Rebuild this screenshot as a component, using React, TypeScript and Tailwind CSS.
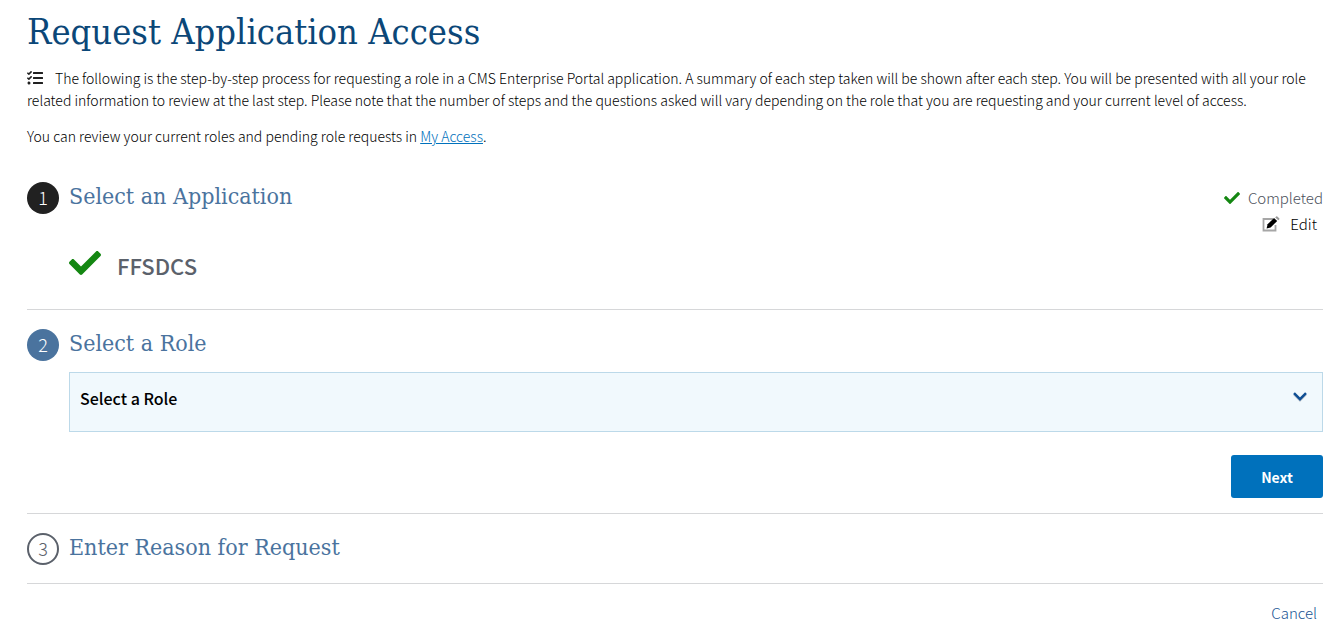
import { useState } from 'react';
import type { ReactNode } from 'react';
import { FaCheck, FaTasks } from 'react-icons/fa';

type StepState = 'done' | 'current' | 'pending';

const badgeStyles: Record<StepState, string> = {
  done: 'bg-[#212121] text-white',
  current: 'bg-[#4a739e] text-white',
  pending: 'border-2 border-[#5b616b] text-[#5b616b]',
};

function EditIcon() {
  return (
    <svg viewBox="0 0 18 16" className="w-[18px] h-4" aria-hidden="true">
      <path d="M11 3H1.5v11.5h12V9" fill="none" stroke="#a6a6a6" strokeWidth="1.8" />
      <path d="M4.6 12.4l1-4.1 6.4-6.3 3.2 3-6.6 6.4z" fill="#000" />
      <path d="M13.2 1.4l.9-.9q.6-.5 1.2 0l1.9 1.7q.6.6 0 1.2l-.9.9z" fill="#999" />
    </svg>
  );
}

function StepHeading({ num, title, state }: { num: number; title: string; state: StepState }) {
  return (
    <div className="flex items-start gap-2.5">
      <span className={`mt-0.5 flex w-8 h-8 shrink-0 items-center justify-center rounded-full pb-0.5 text-lg font-light leading-7 ${badgeStyles[state]}`}>
        {num}
      </span>
      <h2 className="font-['DejaVu_Serif_Condensed','DejaVu_Serif',serif] text-[23px] leading-8 text-[#4a739e]">{title}</h2>
    </div>
  );
}

function Step({ children }: { children: ReactNode }) {
  return <section className="border-b border-[#d6d7d9]">{children}</section>;
}

export default function App() {
  const [role, setRole] = useState('');

  return (
    <main className="pl-[27px] pr-[19px] pt-2 font-['Noto_Sans_CJK_SC',sans-serif] text-[#212121]">
      <h1 className="font-['DejaVu_Serif_Condensed','DejaVu_Serif',serif] text-4xl leading-12 text-[#0b4778]">
        Request Application Access
      </h1>

      <p className="mt-3 text-sm font-light leading-5 text-black">
        <FaTasks className="mb-1 mr-3 inline h-4 w-4 text-[#212121]" aria-hidden="true" />
        The following is the step-by-step process for requesting a role in a CMS Enterprise Portal application. A summary of
        each step taken will be shown after each step. You will be presented with all your role related information to review
        at the last step. Please note that the number of steps and the questions asked will vary depending on the role that
        you are requesting and your current level of access.
      </p>
      <p className="mt-4 text-sm font-light leading-5 text-black">
        You can review your current roles and pending role requests in{' '}
        <a href="#my-access" className="text-[#0071bc] underline">My Access</a>.
      </p>

      <div className="mt-[34px]">
        {/* Application */}
        <Step>
          <div className="flex justify-between">
            <StepHeading num={1} title="Select an Application" state="done" />
            <div className="mt-[5px] flex flex-col items-end text-[15px] font-light leading-[26px]">
              <span className="flex items-center gap-2 text-[#4b515b]">
                <FaCheck className="h-4 w-4 text-[#148712]" aria-hidden="true" />
                Completed
              </span>
              <button type="button" className="mr-1.5 flex items-center gap-2.5 text-black">
                <EditIcon />
                Edit
              </button>
            </div>
          </div>
          <div className="ml-[42px] mt-2.5 flex items-start gap-4 pb-[26px]">
            <FaCheck className="h-8 w-8 text-[#148712]" aria-hidden="true" />
            <span className="text-[22px] font-medium leading-9 text-[#5b616b]">FFSDCS</span>
          </div>
        </Step>

        {/* Role */}
        <Step>
          <div className="pb-[15px] pt-[17px]">
            <StepHeading num={2} title="Select a Role" state="current" />
            <div className="relative ml-[42px] mt-[11px]">
              <select
                aria-label="Select a Role"
                value={role}
                onChange={e => setRole(e.target.value)}
                className="block h-15 w-full appearance-none border border-[#bcd9e9] bg-[#f1f9fd] pb-2 pl-2.5 pr-10 text-base font-medium text-black"
              >
                <option value="">Select a Role</option>
              </select>
              <svg viewBox="0 0 14 10" className="pointer-events-none absolute right-4 top-5 h-2.5 w-3.5" aria-hidden="true">
                <path d="M1 2.5l6 6 6-6" fill="none" stroke="#c5c9ce" strokeWidth="2" />
                <path d="M1 1.2l6 6 6-6" fill="none" stroke="#0f4f94" strokeWidth="2.5" />
              </svg>
            </div>
            <div className="mt-[23px] flex justify-end">
              <button type="button" className="h-[43px] w-[92px] rounded-[3px] bg-[#0071bc] text-sm font-bold text-white">
                Next
              </button>
            </div>
          </div>
        </Step>

        {/* Reason */}
        <Step>
          <div className="pb-[18px] pt-[17px]">
            <StepHeading num={3} title="Enter Reason for Request" state="pending" />
          </div>
        </Step>
      </div>

      <div className="mt-[17px] flex justify-end pr-1.5">
        <button type="button" className="text-[15px] font-light leading-6 text-[#205493]">Cancel</button>
      </div>
    </main>
  );
}
